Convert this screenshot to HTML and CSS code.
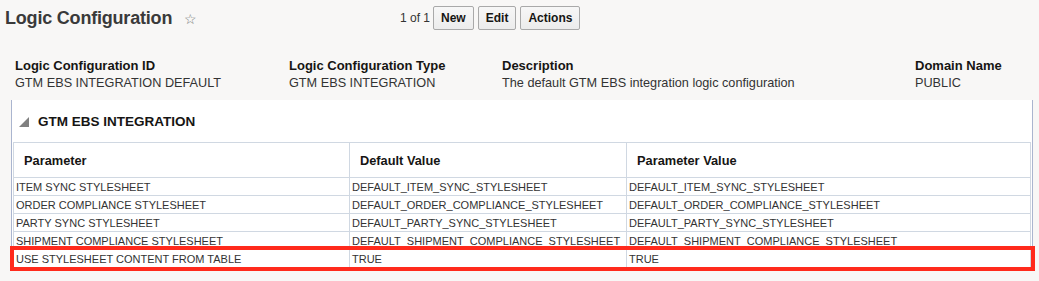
FILE: index.html
```html
<!DOCTYPE html>
<html lang="en">
<head>
    <meta charset="UTF-8">
    <title>Logic Configuration</title>
    <link rel="stylesheet" href="styles.css">
</head>
<body>
    <header class="page-header">
        <div class="title-block">
            <h1>Logic Configuration</h1>
            <span class="star">&#9734;</span>
        </div>
        <div class="toolbar">
            <span class="pager">1 of 1</span>
            <button>New</button>
            <button>Edit</button>
            <button>Actions</button>
        </div>
    </header>

    <section class="summary">
        <div class="field">
            <h3>Logic Configuration ID</h3>
            <p>GTM EBS INTEGRATION DEFAULT</p>
        </div>
        <div class="field">
            <h3>Logic Configuration Type</h3>
            <p>GTM EBS INTEGRATION</p>
        </div>
        <div class="field">
            <h3>Description</h3>
            <p>The default GTM EBS integration logic configuration</p>
        </div>
        <div class="field">
            <h3>Domain Name</h3>
            <p>PUBLIC</p>
        </div>
    </section>

    <section class="panel">
        <div class="panel-title">
            <span class="toggle"></span>
            <h2>GTM EBS INTEGRATION</h2>
        </div>
        <div class="table-wrap">
            <table class="params">
                <thead>
                    <tr>
                        <th class="col-name">Parameter</th>
                        <th class="col-default">Default Value</th>
                        <th>Parameter Value</th>
                    </tr>
                </thead>
                <tbody>
                    <tr>
                        <td>ITEM SYNC STYLESHEET</td>
                        <td>DEFAULT_ITEM_SYNC_STYLESHEET</td>
                        <td>DEFAULT_ITEM_SYNC_STYLESHEET</td>
                    </tr>
                    <tr>
                        <td>ORDER COMPLIANCE STYLESHEET</td>
                        <td>DEFAULT_ORDER_COMPLIANCE_STYLESHEET</td>
                        <td>DEFAULT_ORDER_COMPLIANCE_STYLESHEET</td>
                    </tr>
                    <tr>
                        <td>PARTY SYNC STYLESHEET</td>
                        <td>DEFAULT_PARTY_SYNC_STYLESHEET</td>
                        <td>DEFAULT_PARTY_SYNC_STYLESHEET</td>
                    </tr>
                    <tr>
                        <td>SHIPMENT COMPLIANCE STYLESHEET</td>
                        <td>DEFAULT_SHIPMENT_COMPLIANCE_STYLESHEET</td>
                        <td>DEFAULT_SHIPMENT_COMPLIANCE_STYLESHEET</td>
                    </tr>
                    <tr>
                        <td>USE STYLESHEET CONTENT FROM TABLE</td>
                        <td>TRUE</td>
                        <td>TRUE</td>
                    </tr>
                </tbody>
            </table>
            <div class="highlight"></div>
        </div>
    </section>
</body>
</html>
```

FILE: styles.css
```css
* {
    margin: 0;
    padding: 0;
    box-sizing: border-box;
}
body {
    font-family: 'Liberation Sans', Arial, sans-serif;
    background: #f8f7f6;
    color: #333;
    width: 1039px;
    height: 281px;
    overflow: hidden;
}
.page-header {
    display: grid;
    grid-template-columns: 400px auto;
    align-items: center;
    height: 36px;
    padding: 0 0 0 5px;
}
.title-block {
    display: flex;
    align-items: center;
    gap: 12px;
}
.title-block h1 {
    font-size: 18px;
    font-weight: 700;
    color: #3a3a3a;
    letter-spacing: -0.2px;
}
.star {
    font-size: 14px;
    color: #777;
    margin-top: 1px;
}
.toolbar {
    display: flex;
    align-items: center;
    gap: 4px;
    margin-left: -5px;
}
.pager {
    font-size: 12px;
    color: #333;
    margin-right: -1px;
}
button {
    font-family: inherit;
    font-size: 12px;
    font-weight: 700;
    color: #161513;
    height: 24px;
    padding: 0 7px;
    background: linear-gradient(#f7f7f7, #ececec);
    border: 1px solid #a9a9a9;
    border-radius: 2px;
}
.summary {
    display: grid;
    grid-template-columns: 274px 213px 413px auto;
    padding: 0 0 0 15px;
    margin-top: 21px;
    height: 43px;
}
.field h3 {
    font-size: 13px;
    font-weight: 700;
    color: #161513;
    line-height: 17px;
}
.field p {
    font-size: 12.7px;
    color: #333;
    line-height: 18px;
}
.panel {
    margin: 0 6px 0 11px;
    background: #fff;
    border-left: 1px solid #aab5cf;
    border-right: 1px solid #aab5cf;
    border-bottom: 1px solid #aab5cf;
    padding: 0 1px 2px 1px;
}
.panel-title {
    display: flex;
    align-items: center;
    gap: 9px;
    height: 42px;
    padding-left: 6px;
}
.toggle {
    width: 0;
    height: 0;
    border-left: 10px solid transparent;
    border-bottom: 10px solid #808080;
    margin-top: 2px;
}
.panel-title h2 {
    font-size: 13.5px;
    font-weight: 700;
    color: #161513;
}
.table-wrap {
    position: relative;
}
.params {
    width: 100%;
    border-collapse: collapse;
    table-layout: fixed;
    font-size: 11px;
    color: #333;
}
.params th {
    font-size: 12.8px;
    font-weight: 700;
    color: #161513;
    text-align: left;
    height: 35px;
    padding: 0 10px;
    border: 1px solid #d0d8e2;
}
.params .col-name {
    width: 336px;
}
.params .col-default {
    width: 277px;
}
.params td {
    height: 18px;
    padding: 0 2px;
    border: 1px solid #d0d8e2;
    white-space: nowrap;
}
.highlight {
    position: absolute;
    left: -3px;
    right: -4px;
    bottom: -3px;
    height: 25px;
    border: 4px solid #ff2a1c;
}
```
